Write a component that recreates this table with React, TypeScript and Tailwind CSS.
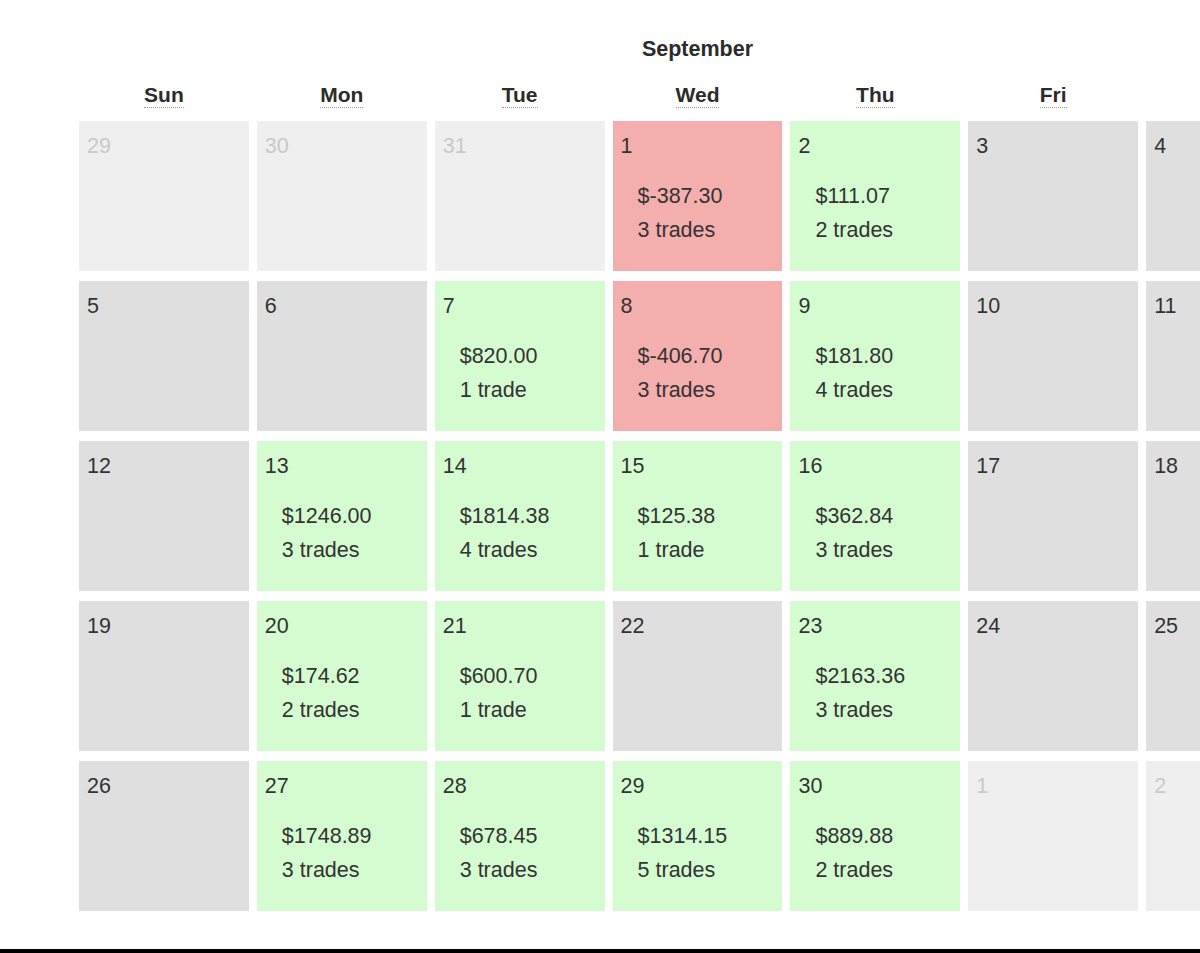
type Day = {
  n: number;
  kind: 'out' | 'empty' | 'win' | 'loss';
  amount?: string;
  trades?: string;
};

const weeks: Day[][] = [
  [
    { n: 29, kind: 'out' },
    { n: 30, kind: 'out' },
    { n: 31, kind: 'out' },
    { n: 1, kind: 'loss', amount: '$-387.30', trades: '3 trades' },
    { n: 2, kind: 'win', amount: '$111.07', trades: '2 trades' },
    { n: 3, kind: 'empty' },
    { n: 4, kind: 'empty' },
  ],
  [
    { n: 5, kind: 'empty' },
    { n: 6, kind: 'empty' },
    { n: 7, kind: 'win', amount: '$820.00', trades: '1 trade' },
    { n: 8, kind: 'loss', amount: '$-406.70', trades: '3 trades' },
    { n: 9, kind: 'win', amount: '$181.80', trades: '4 trades' },
    { n: 10, kind: 'empty' },
    { n: 11, kind: 'empty' },
  ],
  [
    { n: 12, kind: 'empty' },
    { n: 13, kind: 'win', amount: '$1246.00', trades: '3 trades' },
    { n: 14, kind: 'win', amount: '$1814.38', trades: '4 trades' },
    { n: 15, kind: 'win', amount: '$125.38', trades: '1 trade' },
    { n: 16, kind: 'win', amount: '$362.84', trades: '3 trades' },
    { n: 17, kind: 'empty' },
    { n: 18, kind: 'empty' },
  ],
  [
    { n: 19, kind: 'empty' },
    { n: 20, kind: 'win', amount: '$174.62', trades: '2 trades' },
    { n: 21, kind: 'win', amount: '$600.70', trades: '1 trade' },
    { n: 22, kind: 'empty' },
    { n: 23, kind: 'win', amount: '$2163.36', trades: '3 trades' },
    { n: 24, kind: 'empty' },
    { n: 25, kind: 'empty' },
  ],
  [
    { n: 26, kind: 'empty' },
    { n: 27, kind: 'win', amount: '$1748.89', trades: '3 trades' },
    { n: 28, kind: 'win', amount: '$678.45', trades: '3 trades' },
    { n: 29, kind: 'win', amount: '$1314.15', trades: '5 trades' },
    { n: 30, kind: 'win', amount: '$889.88', trades: '2 trades' },
    { n: 1, kind: 'out' },
    { n: 2, kind: 'out' },
  ],
];

const dayNames = ['Sun', 'Mon', 'Tue', 'Wed', 'Thu', 'Fri', 'Sat'];

const bg = {
  out: 'bg-[#efefef] text-[#c9c9c9]',
  empty: 'bg-[#dfdfdf] text-[#333]',
  win: 'bg-[#d5fcd1] text-[#333]',
  loss: 'bg-[#f4aeae] text-[#333]',
};

export default function App() {
  return (
    <div className="w-[1200px] h-[953px] bg-white overflow-hidden flex flex-col font-['Liberation_Sans',Arial,sans-serif] text-[#2b2b2b]">
      <div className="ml-[79px] w-[1237px] shrink-0">
        <div className="pt-[37px] text-center font-bold text-[21.5px] leading-[25px]">September</div>
        <div className="mt-[20px] grid grid-cols-7 gap-x-[8px]">
          {dayNames.map((d) => (
            <div key={d} className="text-center font-bold text-[21px] leading-[25px]">
              <abbr className="no-underline border-b border-dotted border-[#9a9a9a] pb-[1px]">{d}</abbr>
            </div>
          ))}
        </div>
        <div className="mt-[14px] grid grid-cols-7 gap-x-[8px] gap-y-[10px]">
          {weeks.flat().map((day, i) => (
            <div key={i} className={`h-[150px] pt-[13px] px-[8px] text-[21.5px] ${bg[day.kind]}`}>
              <div className="leading-[25px]">{day.n}</div>
              {day.amount && (
                <div className="mt-[20px] pl-[17px] leading-[34px] text-[#333]">
                  <div>{day.amount}</div>
                  <div>{day.trades}</div>
                </div>
              )}
            </div>
          ))}
        </div>
      </div>
      <div className="flex-1" />
      <div className="h-[4px] bg-black shrink-0" />
    </div>
  );
}
